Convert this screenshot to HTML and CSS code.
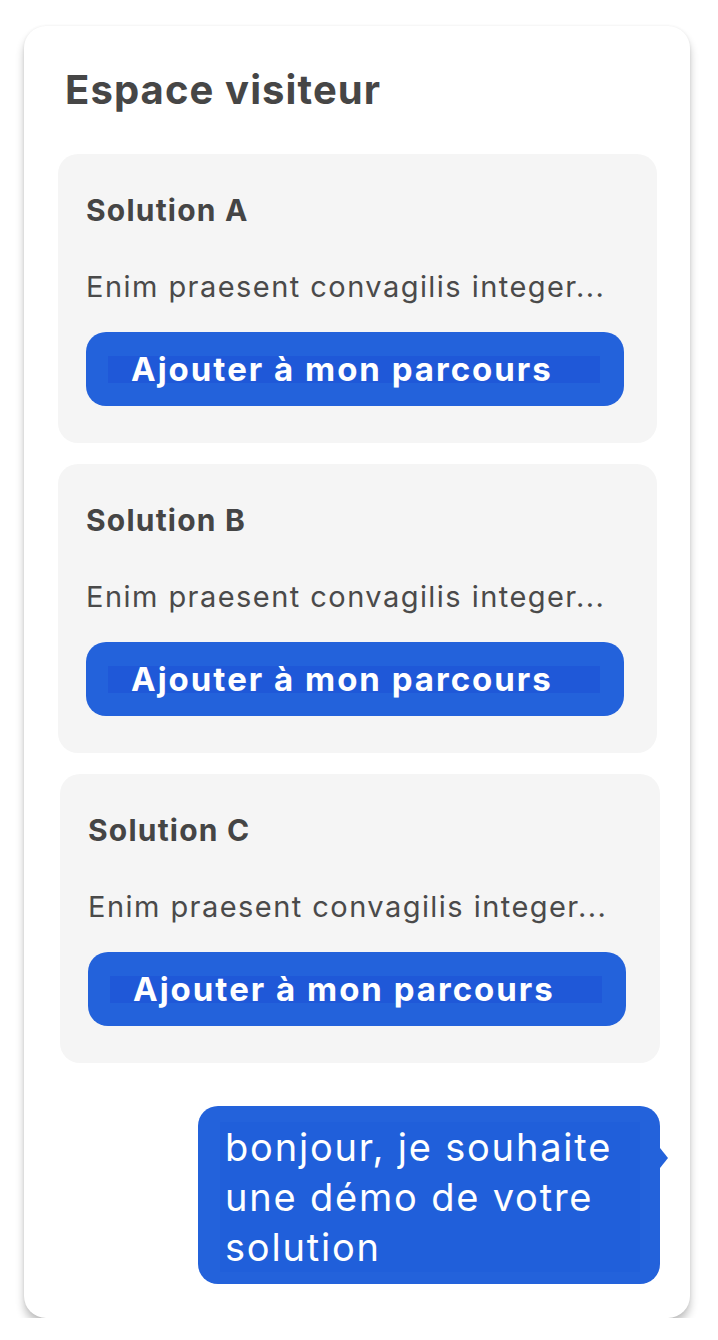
FILE: index.html
```html
<!DOCTYPE html>
<html lang="fr">
<head>
<meta charset="utf-8">
<title>Espace visiteur</title>
<link rel="stylesheet" href="styles.css">
</head>
<body>
<main class="panel">
  <h1 class="panel-title">Espace visiteur</h1>
  <section class="solutions">
    <article class="solution">
      <h2 class="solution-name">Solution A</h2>
      <p class="solution-desc">Enim praesent convagilis integer...</p>
      <button class="add-btn"><span class="add-label">Ajouter à mon parcours</span></button>
    </article>
    <article class="solution">
      <h2 class="solution-name">Solution B</h2>
      <p class="solution-desc">Enim praesent convagilis integer...</p>
      <button class="add-btn"><span class="add-label">Ajouter à mon parcours</span></button>
    </article>
    <article class="solution solution-shifted">
      <h2 class="solution-name">Solution C</h2>
      <p class="solution-desc">Enim praesent convagilis integer...</p>
      <button class="add-btn"><span class="add-label">Ajouter à mon parcours</span></button>
    </article>
  </section>
  <div class="chat">
    <div class="bubble"><span class="bubble-text">bonjour, je souhaite une démo de votre solution</span></div>
  </div>
</main>
</body>
</html>
```
FILE: styles.css
```css
html, body {
  margin: 0;
  padding: 0;
  background: #ffffff;
}

body {
  font-family: "Inter", "DejaVu Sans", sans-serif;
  color: #454545;
}

.panel {
  box-sizing: border-box;
  width: 666px;
  height: 1292px;
  margin: 26px 0 0 24px;
  background: #ffffff;
  border-radius: 22px;
  box-shadow: 0 7px 8px rgba(0, 0, 0, 0.24), 0 0 3px rgba(0, 0, 0, 0.07);
  padding: 0 30px 0 34px;
  display: flex;
  flex-direction: column;
}

.panel-title {
  margin: 39px 0 0 7px;
  font-size: 40px;
  line-height: 50px;
  font-weight: 700;
  color: #464646;
  letter-spacing: 1.1px;
}

.solutions {
  margin-top: 39px;
  display: flex;
  flex-direction: column;
  gap: 21px;
}

.solution {
  box-sizing: border-box;
  width: 599px;
  height: 289px;
  background: #f5f5f5;
  border-radius: 20px;
  padding: 36px 33px 0 28px;
  display: flex;
  flex-direction: column;
}

.solution-shifted {
  margin-left: 2px;
  width: 600px;
}

.solution-name {
  margin: 0;
  font-size: 30px;
  line-height: 40px;
  font-weight: 700;
  color: #454545;
  letter-spacing: 1.2px;
}

.solution-desc {
  margin: 39px 0 0 0;
  font-size: 29px;
  line-height: 36px;
  font-weight: 400;
  color: #4a4a4a;
  letter-spacing: 1.45px;
  white-space: nowrap;
}

.add-btn {
  margin-top: 27px;
  box-sizing: border-box;
  width: 538px;
  height: 74px;
  border: none;
  border-radius: 20px;
  background: #2362db;
  padding: 0 0 0 22px;
  display: flex;
  align-items: center;
  font-family: inherit;
  cursor: pointer;
}

.add-label {
  display: block;
  width: 492px;
  box-sizing: border-box;
  padding-left: 23px;
  background: #1f58d8;
  color: #ffffff;
  font-size: 33px;
  line-height: 27px;
  font-weight: 700;
  text-align: left;
  white-space: nowrap;
  letter-spacing: 2px;
}

.chat {
  margin-top: 43px;
  display: flex;
  justify-content: flex-end;
}

.bubble {
  position: relative;
  box-sizing: border-box;
  width: 462px;
  height: 178px;
  background: #2362db;
  border-radius: 20px;
  padding: 16px 20px 0 22px;
}

.bubble::after {
  content: "";
  position: absolute;
  right: -8px;
  top: 42px;
  border-top: 10px solid transparent;
  border-bottom: 10px solid transparent;
  border-left: 8px solid #2362db;
}

.bubble-text {
  display: block;
  background: #205fda;
  padding-left: 5px;
  color: #ffffff;
  font-size: 38px;
  line-height: 50px;
  font-weight: 400;
  letter-spacing: 1.8px;
}
```
